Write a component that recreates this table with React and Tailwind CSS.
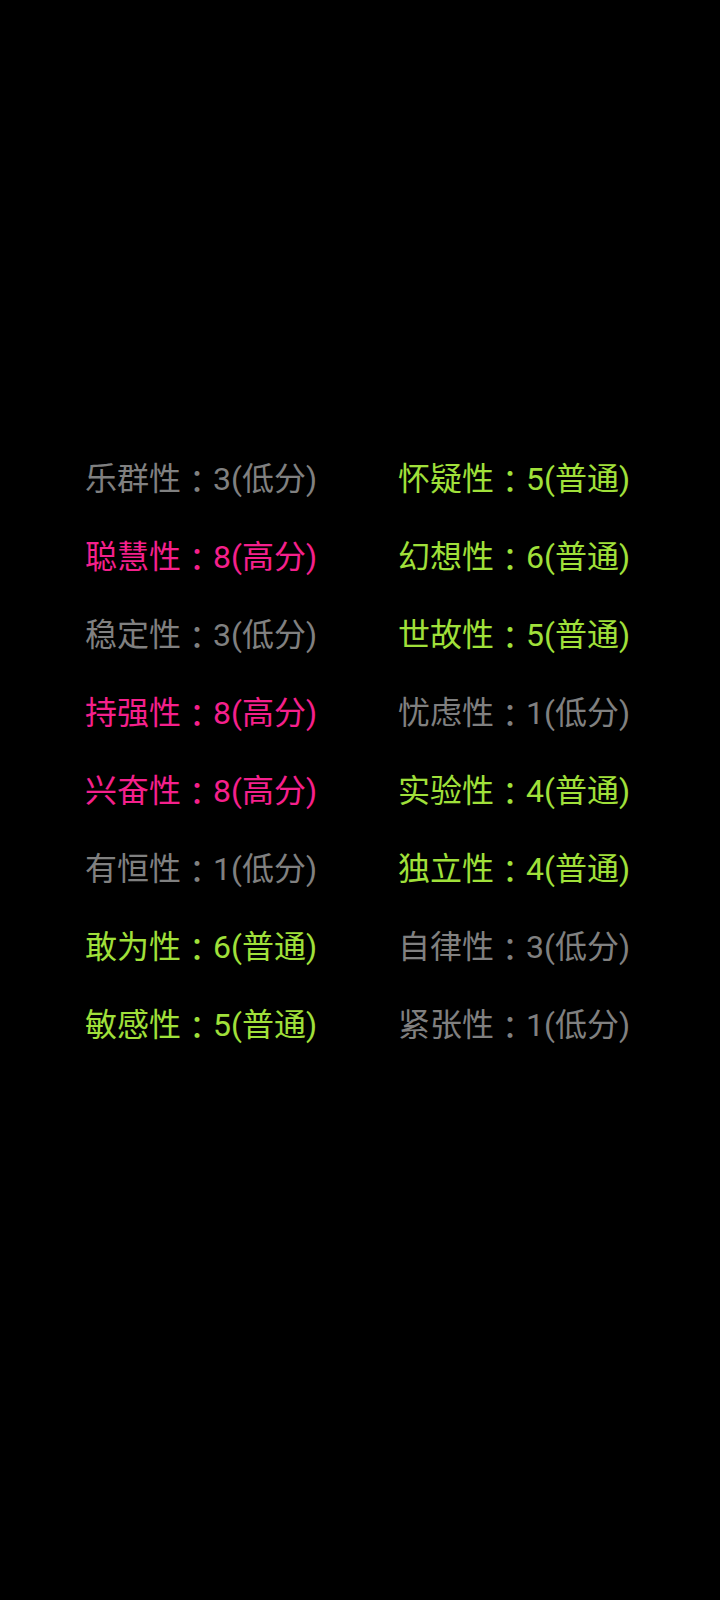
import React from "react";

const GRAY = "text-[#808080]";
const PINK = "text-[#f5208c]";
const GREEN = "text-[#a0e03a]";

const rows = [
  [["乐群性", "3(低分)", GRAY], ["怀疑性", "5(普通)", GREEN]],
  [["聪慧性", "8(高分)", PINK], ["幻想性", "6(普通)", GREEN]],
  [["稳定性", "3(低分)", GRAY], ["世故性", "5(普通)", GREEN]],
  [["持强性", "8(高分)", PINK], ["忧虑性", "1(低分)", GRAY]],
  [["兴奋性", "8(高分)", PINK], ["实验性", "4(普通)", GREEN]],
  [["有恒性", "1(低分)", GRAY], ["独立性", "4(普通)", GREEN]],
  [["敢为性", "6(普通)", GREEN], ["自律性", "3(低分)", GRAY]],
  [["敏感性", "5(普通)", GREEN], ["紧张性", "1(低分)", GRAY]],
];

const App = () => {
  return (
    <div className="w-[720px] h-[1600px] bg-black pt-[440px] pl-[85px] font-['Roboto','Noto_Sans_CJK_SC',sans-serif]">
      <div className="grid grid-cols-[313px_313px] auto-rows-[78px] text-[32px]">
        {rows.flat().map(([name, score, color], i) => (
          <div key={i} className={`${color} flex items-center whitespace-nowrap leading-none`}>
            {name}
            <span className="font-['Noto_Sans_CJK_JP',sans-serif] leading-none">：</span>
            {score}
          </div>
        ))}
      </div>
    </div>
  );
};

export default App;
